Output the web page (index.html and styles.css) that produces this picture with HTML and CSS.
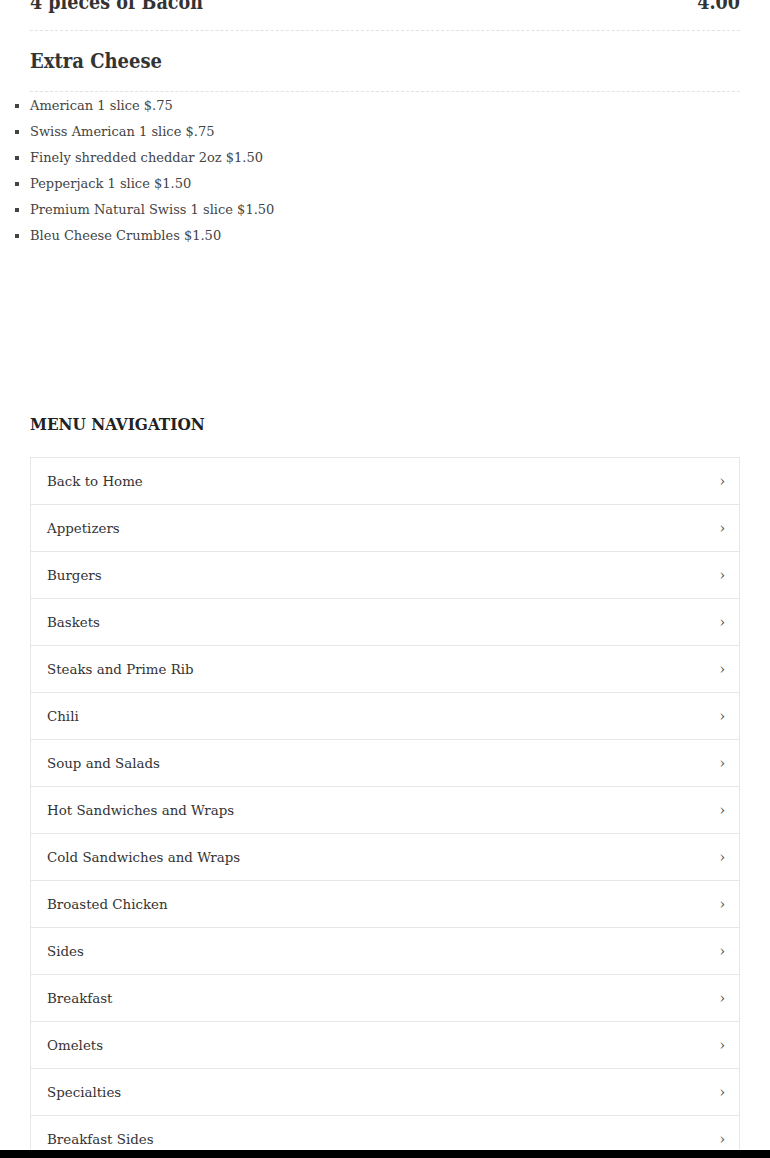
FILE: index.html
```html
<!DOCTYPE html>
<html lang="en">
<head>
  <meta charset="UTF-8" />
  <meta name="viewport" content="width=device-width, initial-scale=1.0"/>
  <title>Menu</title>
  <link rel="stylesheet" href="styles.css">
</head>
<body>
  <div class="menu-page">
    <!-- Add-ons -->
    <div class="menu-item">
      <h4 class="item-name">4 pieces of Bacon</h4>
      <span class="item-price">4.00</span>
    </div>

    <div class="menu-section">
      <h3 class="section-title">Extra Cheese</h3>
      <ul class="extras">
        <li>American 1 slice $.75</li>
        <li>Swiss American 1 slice $.75</li>
        <li>Finely shredded cheddar 2oz $1.50</li>
        <li>Pepperjack 1 slice $1.50</li>
        <li>Premium Natural Swiss 1 slice $1.50</li>
        <li>Bleu Cheese Crumbles $1.50</li>
      </ul>
    </div>

    <!-- Menu navigation -->
    <div class="menu-nav">
      <h3 class="nav-title">MENU NAVIGATION</h3>
      <ul class="nav-list">
        <li><a href="#">Back to Home <span class="chev">&rsaquo;</span></a></li>
        <li><a href="#">Appetizers <span class="chev">&rsaquo;</span></a></li>
        <li><a href="#">Burgers <span class="chev">&rsaquo;</span></a></li>
        <li><a href="#">Baskets <span class="chev">&rsaquo;</span></a></li>
        <li><a href="#">Steaks and Prime Rib <span class="chev">&rsaquo;</span></a></li>
        <li><a href="#">Chili <span class="chev">&rsaquo;</span></a></li>
        <li><a href="#">Soup and Salads <span class="chev">&rsaquo;</span></a></li>
        <li><a href="#">Hot Sandwiches and Wraps <span class="chev">&rsaquo;</span></a></li>
        <li><a href="#">Cold Sandwiches and Wraps <span class="chev">&rsaquo;</span></a></li>
        <li><a href="#">Broasted Chicken <span class="chev">&rsaquo;</span></a></li>
        <li><a href="#">Sides <span class="chev">&rsaquo;</span></a></li>
        <li><a href="#">Breakfast <span class="chev">&rsaquo;</span></a></li>
        <li><a href="#">Omelets <span class="chev">&rsaquo;</span></a></li>
        <li><a href="#">Specialties <span class="chev">&rsaquo;</span></a></li>
        <li><a href="#">Breakfast Sides <span class="chev">&rsaquo;</span></a></li>
      </ul>
    </div>
  </div>
  <div class="bottom-bar"></div>
</body>
</html>
```

FILE: styles.css
```css
html, body {
  height: 100%;
}

body {
  margin: 0;
  padding: 0;
  font-family: "DejaVu Serif", serif;
  color: #333;
  background: #fff;
  overflow: hidden;
}

.menu-page {
  padding: 0 30px;
}

.menu-item {
  display: flex;
  justify-content: space-between;
  align-items: baseline;
  margin-top: -17px;
  padding-bottom: 7px;
  border-bottom: 1px dashed #e2e2e2;
}

.item-name,
.item-price {
  margin: 0;
  font-family: "DejaVu Serif Condensed", "DejaVu Serif", serif;
  font-size: 19.5px;
  font-weight: bold;
  line-height: 40px;
  color: #333;
}

.menu-section {
  padding-top: 14px;
}

.section-title {
  margin: 0;
  font-family: "DejaVu Serif Condensed", "DejaVu Serif", serif;
  font-size: 20px;
  font-weight: bold;
  line-height: 32px;
  padding-bottom: 14px;
  border-bottom: 1px dashed #e2e2e2;
}

.extras {
  margin: 0;
  padding: 1px 0 0;
  list-style: square;
  font-size: 13px;
  line-height: 26px;
  color: #444;
}

.menu-nav {
  margin-top: 162px;
}

.nav-title {
  margin: 0 0 20px;
  font-family: "DejaVu Serif Condensed", "DejaVu Serif", serif;
  font-size: 17px;
  font-weight: bold;
  line-height: 26px;
  color: #222;
}

.nav-list {
  margin: 0;
  padding: 0;
  list-style: none;
  border: 1px solid #e6e6e6;
}

.nav-list li + li {
  border-top: 1px solid #e6e6e6;
}

.nav-list a {
  display: flex;
  justify-content: space-between;
  align-items: center;
  height: 46px;
  padding: 0 14px 0 16px;
  font-size: 13.4px;
  color: #333;
  text-decoration: none;
}

.chev {
  font-size: 14px;
  color: #555;
}

.bottom-bar {
  position: fixed;
  left: 0;
  right: 0;
  bottom: 0;
  height: 8px;
  background: #000;
}
```
